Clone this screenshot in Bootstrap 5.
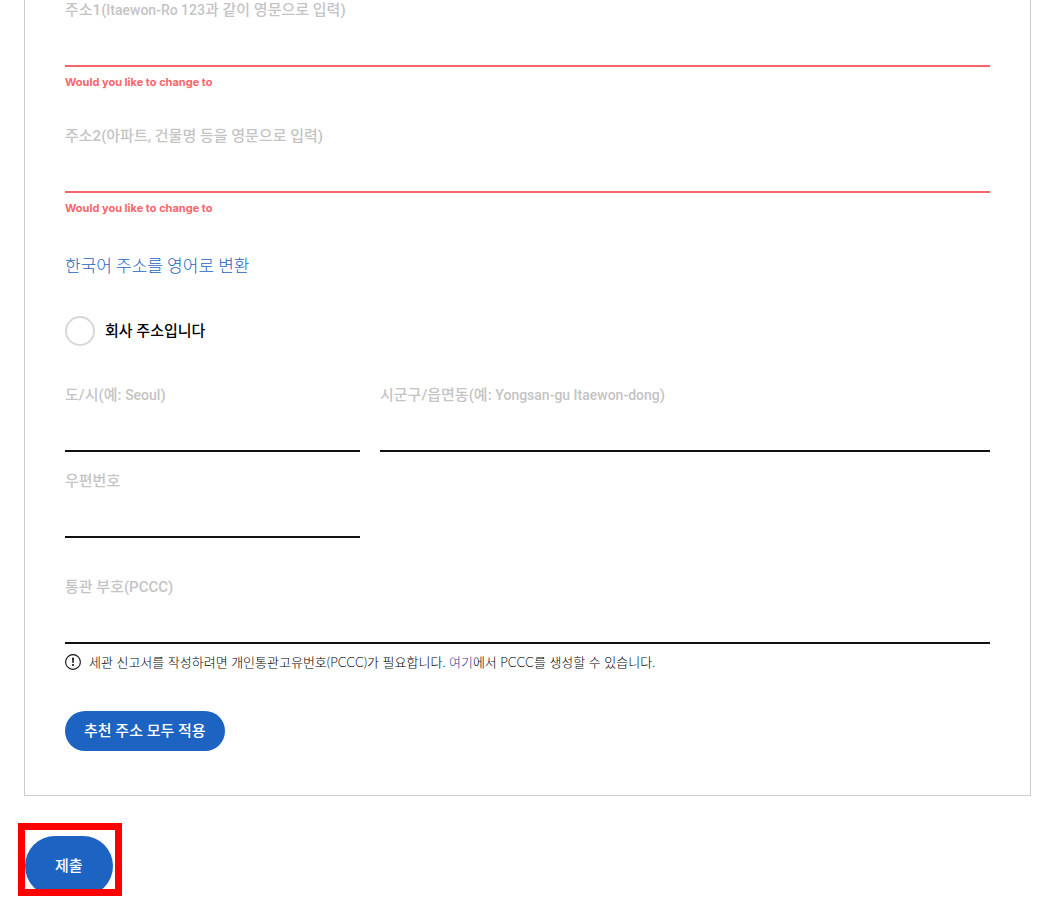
<!DOCTYPE html>
<html lang="ko">
<head>
<meta charset="utf-8">
<meta name="viewport" content="width=device-width, initial-scale=1">
<title>배송 주소</title>
<link href="https://cdn.jsdelivr.net/npm/bootstrap@5.3.0/dist/css/bootstrap.min.css" rel="stylesheet">
<style>
  body { font-family: Roboto, "Noto Sans CJK KR", sans-serif; font-size: 14px; line-height: 20px; color: #111; }
  .page-wrap { padding: 0 12px 6px 24px; }
  .address-panel { padding: 0 40px 44px; border: 1px solid #ccc; border-top: 0; }
  .field-label { display: block; font-size: 15px; line-height: 20px; font-weight: 500; color: #c4c4c4; }
  .latin { font-size: 14px; }
  .line-input { height: 47px; padding: 0; border: 0; border-bottom: 2px solid #111; border-radius: 0; background: transparent; }
  .line-input.has-error { border-color: #f8666b; }
  .line-input:focus { box-shadow: none; }
  .error-text { margin-top: 5px; font: 700 11px/20px Inter, sans-serif; color: #f8666b; }
  .field-block { margin-bottom: 34px; }
  .convert-link { padding-top: 1px; font-size: 17px; line-height: 26px; font-weight: 300; }
  a { color: #1d64c2; text-decoration: none; }
  .round-check { width: 30px; height: 30px; margin: 0; border: 2px solid #d8d8d8; }
  .check-row { margin: 37px 0 39px; gap: 10px; }
  .check-row label { font-size: 15px; font-weight: 500; color: #000; }
  .city-row { --bs-gutter-x: 20px; margin-bottom: 39px; row-gap: 19px; }
  .note-row { margin: 8px 0 39px; gap: 8px; font-family: Lato, "Noto Sans CJK KR", sans-serif; font-size: 13px; font-weight: 300; color: #000; }
  .note-row a { color: #1d3f9a; }
  .pill { border: 0; border-radius: 30px; background: #1d64c2; color: #fff; font-size: 15px; line-height: 20px; font-weight: 500; }
  .apply-pill { padding: 10px 19px; }
  .submit-frame { display: inline-block; height: 73px; margin: 27px 0 0 -6px; padding: 6px 2px 0 0; border: 7px solid #f00; overflow: hidden; vertical-align: top; }
  .submit-pill { padding: 20px 30px; }
</style>
</head>
<body>
<main class="page-wrap">
  <form>
    <section class="address-panel">
      <div class="field-block">
        <label class="field-label" for="addr1">주소1(<span class="latin">Itaewon-Ro 123</span>과 같이 영문으로 입력)</label>
        <input class="form-control line-input has-error" id="addr1" type="text">
        <div class="error-text">Would you like to change to</div>
      </div>
      <div class="field-block">
        <label class="field-label" for="addr2">주소2(아파트, 건물명 등을 영문으로 입력)</label>
        <input class="form-control line-input has-error" id="addr2" type="text">
        <div class="error-text">Would you like to change to</div>
      </div>
      <a class="convert-link d-block" href="#">한국어 주소를 영어로 변환</a>
      <div class="check-row d-flex align-items-center">
        <input class="form-check-input round-check rounded-circle" type="checkbox" id="company">
        <label for="company">회사 주소입니다</label>
      </div>
      <div class="row city-row">
        <div class="col-4">
          <label class="field-label" for="city">도/시(예: <span class="latin">Seoul</span>)</label>
          <input class="form-control line-input" id="city" type="text">
        </div>
        <div class="col-8">
          <label class="field-label" for="district">시군구/읍면동(예: <span class="latin">Yongsan-gu Itaewon-dong</span>)</label>
          <input class="form-control line-input" id="district" type="text">
        </div>
        <div class="col-4">
          <label class="field-label" for="zip">우편번호</label>
          <input class="form-control line-input" id="zip" type="text">
        </div>
      </div>
      <label class="field-label" for="pccc">통관 부호(PCCC)</label>
      <input class="form-control line-input" id="pccc" type="text">
      <div class="note-row d-flex align-items-center">
        <svg class="flex-shrink-0" width="16" height="16" viewBox="0 0 16 16" aria-hidden="true"><circle cx="8" cy="8" r="7.4" fill="none" stroke="#111" stroke-width="1.1"/><path d="M7 3.8h2L8.6 9H7.4z" fill="#111"/><circle cx="8" cy="11" r="1.1" fill="#111"/></svg>
        <span>세관 신고서를 작성하려면 개인통관고유번호(PCCC)가 필요합니다. <a href="#">여기</a>에서 PCCC를 생성할 수 있습니다.</span>
      </div>
      <button class="btn pill apply-pill d-block" type="button">추천 주소 모두 적용</button>
    </section>
    <div class="submit-frame">
      <button class="btn pill submit-pill d-block" type="submit">제출</button>
    </div>
  </form>
</main>
<script src="https://cdn.jsdelivr.net/npm/bootstrap@5.3.0/dist/js/bootstrap.bundle.min.js"></script>
</body>
</html>
